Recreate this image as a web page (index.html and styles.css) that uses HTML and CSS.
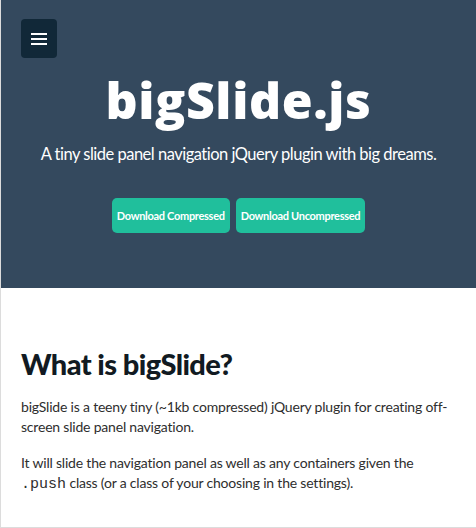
FILE: index.html
```html
<!DOCTYPE html>
<html>
<head>
<meta charset="utf-8">
<link rel="stylesheet" href="styles.css">
</head>
<body>
<div class="page">
  <header class="hero">
    <div class="topbar">
      <a class="menu-btn" href="#">
        <svg width="16" height="12" viewBox="0 0 16 12"><rect x="0" y="0" width="16" height="2" fill="#fff"/><rect x="0" y="5" width="16" height="2" fill="#fff"/><rect x="0" y="10" width="16" height="2" fill="#fff"/></svg>
      </a>
    </div>
    <h1 class="title">bigSlide.js</h1>
    <p class="subtitle">A tiny slide panel navigation jQuery plugin with big dreams.</p>
    <div class="actions">
      <a class="btn" href="#">Download Compressed</a>
      <a class="btn" href="#">Download Uncompressed</a>
    </div>
  </header>
  <main class="content">
    <h2 class="heading">What is bigSlide?</h2>
    <p class="text">bigSlide is a teeny tiny (~1kb compressed) jQuery plugin for creating off-screen slide panel navigation.</p>
    <p class="text">It will slide the navigation panel as well as any containers given the <code>.push</code> class (or a class of your choosing in the settings).</p>
  </main>
</div>
</body>
</html>
```
FILE: styles.css
```css
html, body { margin: 0; padding: 0; background: #fff; }
body { font-family: "Lato", "Open Sans", sans-serif; }
.page {
  width: 475px;
  height: 527px;
  border-left: 1px solid #dcdcdc;
  border-bottom: 1px solid #dcdcdc;
  overflow: hidden;
}
.hero {
  background: #34495e;
  height: 288px;
  padding: 19px 0 0 0;
  box-sizing: border-box;
  text-align: center;
  color: #fff;
}
.topbar { display: flex; padding-left: 20px; }
.menu-btn {
  width: 36px; height: 39px;
  background: #112838;
  border-radius: 4px;
  display: flex; align-items: center; justify-content: center;
}
.title {
  margin: 12px 0 0;
  font-family: "Open Sans", "Lato", sans-serif;
  font-size: 50px;
  font-weight: 800;
  line-height: 60px;
  letter-spacing: 0.6px;
}
.subtitle {
  margin: 12px 0 0;
  font-size: 16.5px;
  line-height: 24px;
  letter-spacing: -0.5px;
}
.actions {
  display: flex; justify-content: center; gap: 6px;
  margin-top: 32px;
}
.btn {
  background: #20bf9c;
  color: #fff;
  text-decoration: none;
  font-size: 11px;
  font-weight: 700;
  letter-spacing: -0.3px;
  height: 35px;
  padding: 0 5px;
  border-radius: 5px;
  display: flex; align-items: center;
}
.content { padding: 58px 20px 0 20px; color: #2e2e2e; }
.heading {
  margin: 0 0 15px;
  font-size: 29px;
  font-weight: 900;
  color: #111a22;
  line-height: 36px;
  letter-spacing: -0.6px;
}
.text {
  margin: 0 0 16px;
  font-size: 14px;
  line-height: 20px;
  letter-spacing: -0.2px;
}
code { font-family: "Liberation Mono", monospace; font-size: 15px; letter-spacing: 0; }
```
